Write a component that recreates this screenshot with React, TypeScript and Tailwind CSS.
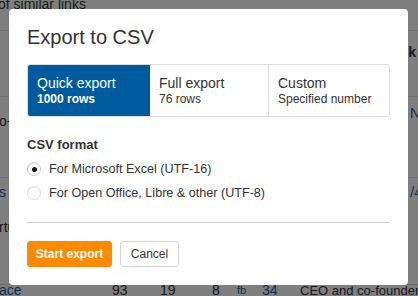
import React from "react";

export default function App() {
  return (
    <div
      className="relative w-[418px] h-[296px] overflow-hidden bg-white text-[#333]"
      style={{ fontFamily: '"Liberation Sans", Arial, sans-serif' }}
    >
      {/* page behind the overlay */}
      <div className="flex flex-col text-[14px]">
        <div className="h-[31px] border-b border-[#ddd] flex">
          <span className="ml-[-2px] mt-[-4px] leading-[17px] whitespace-nowrap">of similar links</span>
        </div>
        <div className="h-[66px] border-b border-[#ddd] flex justify-end">
          <span className="mt-[13px] mr-[2px] font-bold leading-[17px]">k</span>
        </div>
        <div className="h-[81px] border-b border-[#ddd] flex justify-between">
          <span className="mt-[16px] ml-[-1px] leading-[17px]">o-exec</span>
          <span className="mt-[8px] mr-[-2px] leading-[17px] text-[#1a5fa8]">N</span>
        </div>
        <div className="h-[107px] border-b border-[#ddd] flex justify-between">
          <div className="flex flex-col ml-[-1px] mt-[6px] gap-[18px] leading-[17px]">
            <span className="text-[#1a5fa8]">s to</span>
            <span>rtu</span>
          </div>
          <span className="mt-[6px] mr-[-4px] leading-[17px] text-[#1a5fa8]">/4</span>
        </div>
        <div className="flex items-center h-[18px] mt-[-4px] leading-[17px] text-[14px] whitespace-nowrap">
          <span className="shrink-0 ml-[-1px] w-[113px] text-[#1a5fa8]">ace</span>
          <span className="shrink-0 w-[48px]">93</span>
          <span className="shrink-0 w-[52px]">19</span>
          <span className="shrink-0 w-[25px]">8</span>
          <span className="shrink-0 w-[25px] text-[11px] text-[#1a5fa8]">fb</span>
          <span className="shrink-0 w-[38px] text-[#1a5fa8]">34</span>
          <span className="shrink-0 text-[13px]">CEO and co-founder</span>
        </div>
      </div>

      {/* overlay */}
      <div className="absolute inset-0 bg-black/50" />

      {/* modal */}
      <div className="absolute left-[9px] top-[9px] w-[399px] h-[276px] bg-white rounded-[4px] px-[18px] pt-[16px] pb-[18px] flex flex-col">
        <h2 className="text-[20px] leading-[24px] text-[#333]">Export to CSV</h2>

        <div className="mt-[15px] h-[53px] grid grid-cols-[122px_119px_1fr] border border-[#ddd] rounded-[3px] overflow-hidden">
          <div className="bg-[#005a9e] text-white pl-[9px] pt-[10px] pb-[9px] flex flex-col">
            <span className="text-[14px] leading-[17px]">Quick export</span>
            <span className="text-[12px] leading-[15px] font-bold">1000 rows</span>
          </div>
          <div className="pl-[9px] pt-[10px] pb-[9px] flex flex-col border-r border-[#ddd] text-[#333]">
            <span className="text-[14px] leading-[17px]">Full export</span>
            <span className="text-[12px] leading-[15px]">76 rows</span>
          </div>
          <div className="pl-[9px] pt-[10px] pb-[9px] flex flex-col text-[#333]">
            <span className="text-[14px] leading-[17px]">Custom</span>
            <span className="text-[12px] leading-[15px]">Specified number</span>
          </div>
        </div>

        <div className="mt-[20px] text-[13px] leading-[16px] font-bold text-[#333]">CSV format</div>

        <div className="mt-[4px] flex flex-col">
          <label className="h-[24px] flex items-center gap-[8px] text-[12.6px] text-[#333]">
            <span className="w-[14px] h-[14px] rounded-full border border-[#c8c8c8] bg-white flex items-center justify-center shadow-[inset_0_1px_1px_rgba(0,0,0,0.08)]">
              <span className="w-[5px] h-[5px] rounded-full bg-[#111]" />
            </span>
            <span>For Microsoft Excel (UTF-16)</span>
          </label>
          <label className="h-[24px] flex items-center gap-[8px] text-[12.6px] text-[#333]">
            <span className="w-[14px] h-[14px] rounded-full border border-[#dcdcdc] bg-white shadow-[inset_0_1px_1px_rgba(0,0,0,0.05)]" />
            <span>For Open Office, Libre &amp; other (UTF-8)</span>
          </label>
        </div>

        <div className="mt-[17px] h-px bg-[#cfcfcf]" />

        <div className="mt-[18px] flex gap-[8px]">
          <button className="w-[85px] h-[26px] rounded-[3px] bg-[#ff8a00] text-white text-[12px] font-bold">
            Start export
          </button>
          <button className="w-[59px] h-[26px] rounded-[3px] bg-white border border-[#d4d4d4] text-[#333] text-[12px]">
            Cancel
          </button>
        </div>
      </div>
    </div>
  );
}
